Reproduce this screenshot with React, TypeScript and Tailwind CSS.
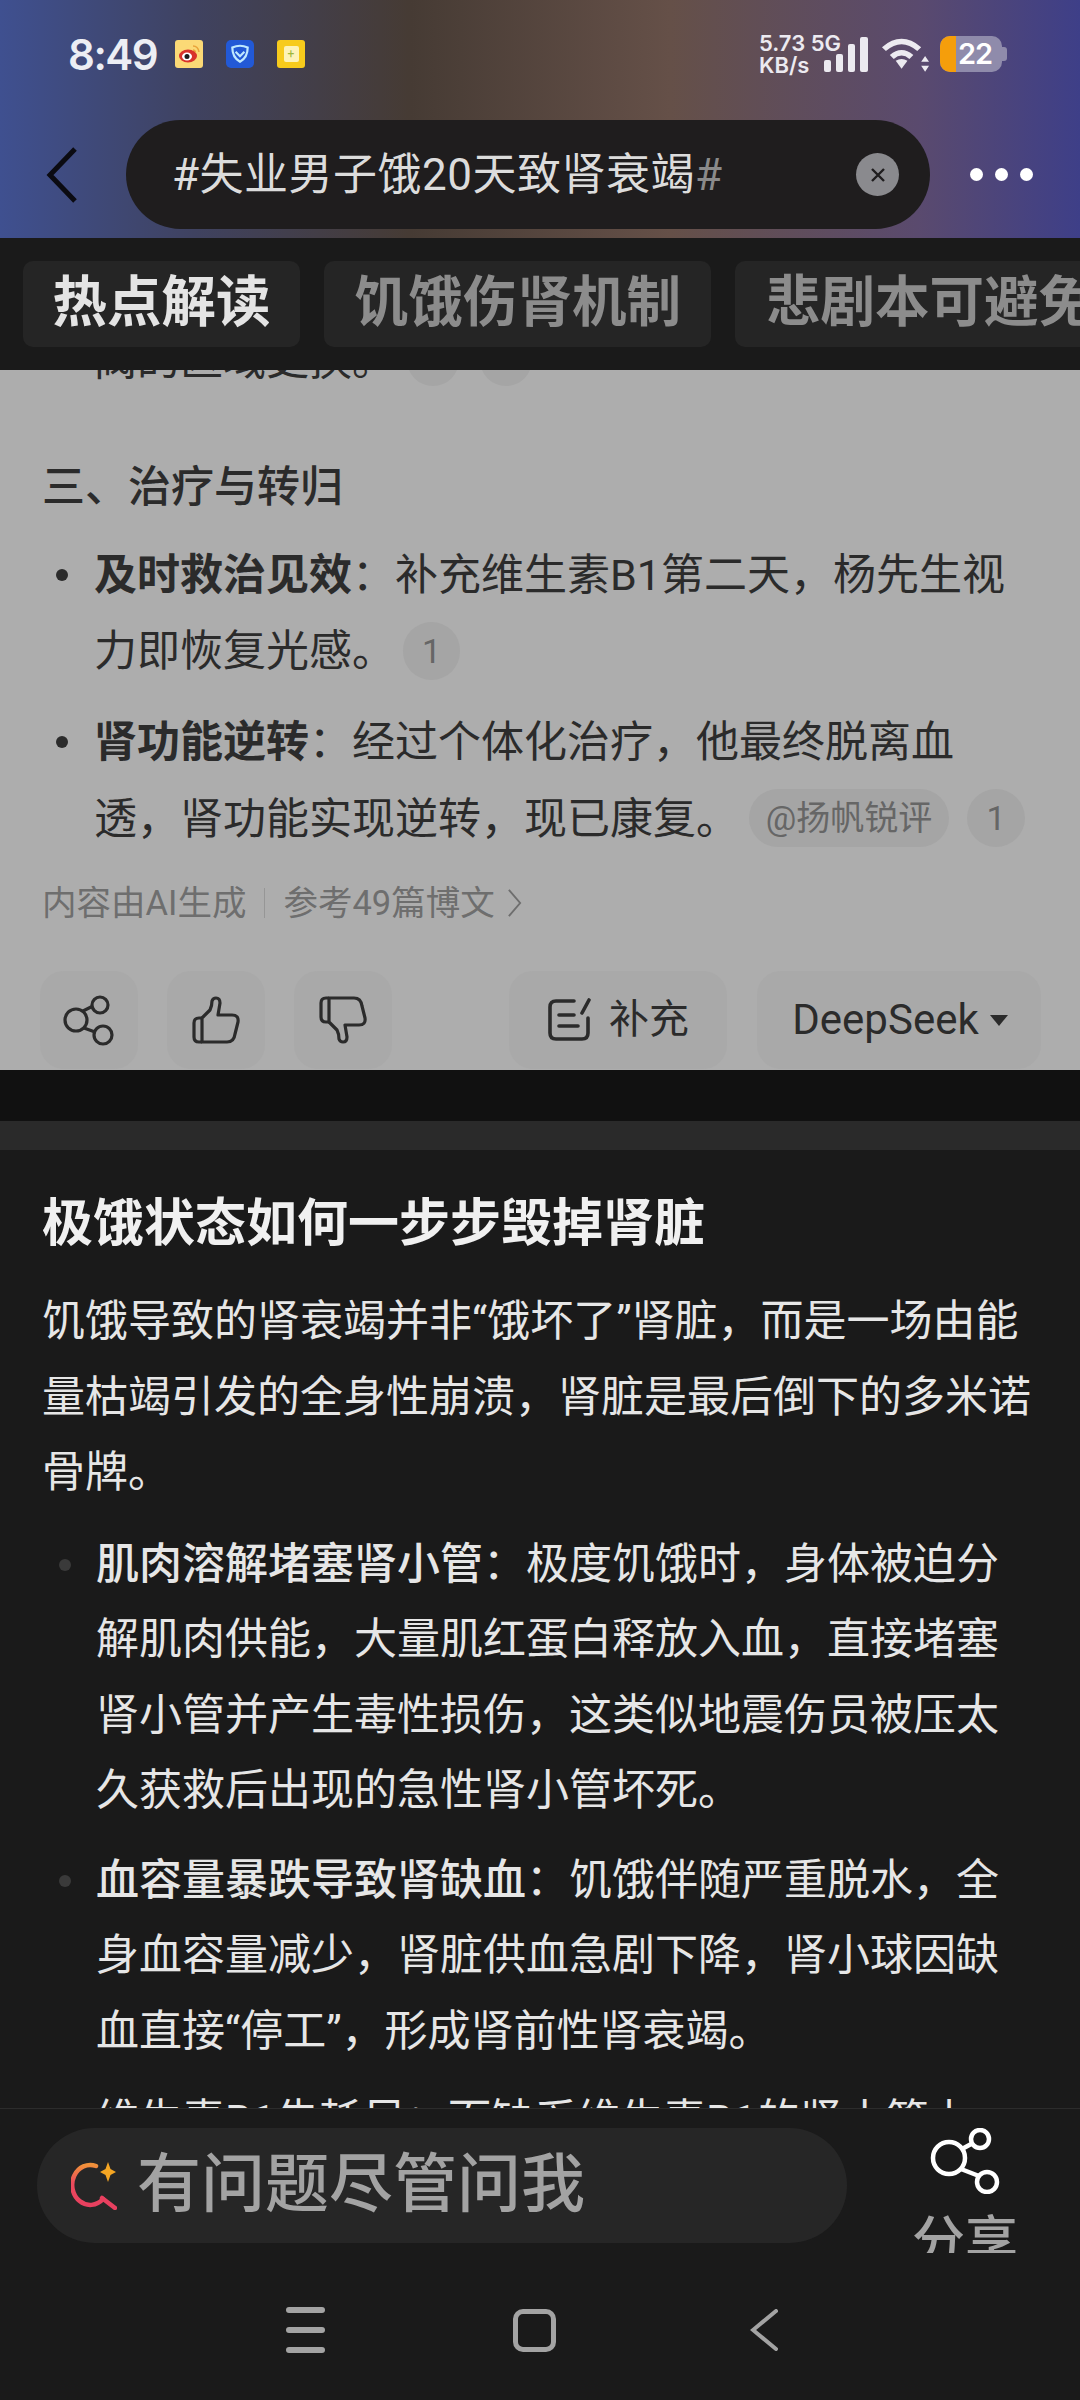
const SANS = "font-['Roboto','Noto_Sans_CJK_SC',sans-serif]";

const Chip = ({ children, className }: { children: React.ReactNode; className?: string }) => (
  <span className={`flex h-[58px] shrink-0 items-center justify-center rounded-full bg-[#a5a5a5] text-[34px] leading-none text-[#666666] ${className ?? ""}`}>
    {children}
  </span>
);

const ThumbIcon = ({ className }: { className?: string }) => (
  <svg viewBox="0 0 48 48" className={`h-[48px] w-[48px] ${className ?? ""}`} fill="none" stroke="currentColor" strokeWidth="3.2" strokeLinejoin="round">
    <path d="M10 22L18 14Q20 10 20 5Q21 2 24 2Q28 2 28 7L26 19H40Q47 19 46 26L43 38Q42 46 35 46H10Z" />
    <path d="M10 22H7Q2 22 2 27V41Q2 46 7 46H10" />
  </svg>
);

const SearchSpark = () => (
  <svg viewBox="0 0 46 48" className="h-[48px] w-[46px]" fill="none">
    <defs>
      <linearGradient id="spark" x1="0" y1="0" x2="0" y2="1">
        <stop offset="0" stopColor="#f0913a" />
        <stop offset="0.45" stopColor="#ec4a5c" />
        <stop offset="1" stopColor="#e8405f" />
      </linearGradient>
    </defs>
    <path d="M25 4A18 20 0 1 0 32 37" stroke="url(#spark)" strokeWidth="4.5" strokeLinecap="round" />
    <path d="M31 36L44 46" stroke="#e8405f" strokeWidth="4.5" strokeLinecap="round" />
    <path d="M37 0l2.500 7 5.500 3-5.500 3-2.500 7-2.500-7-5.500-3 5.500-3z" fill="#f5a623" />
  </svg>
);

export default function App() {
  return (
    <div className={`relative h-[2400px] w-[1080px] overflow-hidden bg-[#1a1a1a] ${SANS}`}>
      {/* Header */}
      <header className="h-[238px] bg-[linear-gradient(90deg,#3f5090_0%,#3f4260_18%,#463b34_38%,#655048_62%,#5a4a6e_85%,#3e3f88_100%)]">
        <div className="flex h-[108px] items-center justify-between pl-[68px] pr-[73px]">
          <div className="flex items-center">
            <span className="w-[107px] font-['Inter'] text-[42px] font-semibold tracking-[-1.5px] text-[#eceef4]">8:49</span>
            <div className="flex gap-[23px]">
              <span className="flex h-[28px] w-[28px] items-center justify-center rounded-[3px] bg-[#fbd976]">
                <svg viewBox="0 0 28 28" className="h-[28px] w-[28px]" fill="none">
                  <path d="M18 6q5 0 6 6M18 10q2 0 2.500 2.500" stroke="#e8a33a" strokeWidth="1.500" />
                  <ellipse cx="13" cy="16" rx="9" ry="6.500" fill="#d8322a" />
                  <ellipse cx="12" cy="16.500" rx="5" ry="4" fill="#ffffff" />
                  <circle cx="12" cy="16.500" r="2.500" fill="#1c1c1c" />
                </svg>
              </span>
              <span className="flex h-[28px] w-[28px] items-center justify-center rounded-[5px] bg-[#2259d6]">
                <svg viewBox="0 0 20 20" className="h-[22px] w-[22px]" fill="none" stroke="#bfe9ff" strokeWidth="2">
                  <path d="M3 4q7-3 14 0q0 9-7 13q-7-4-7-13zM6 8l4 4 4-4" />
                </svg>
              </span>
              <span className="flex h-[28px] w-[28px] items-center justify-center rounded-[3px] bg-[#f7cb1c]">
                <span className="flex h-[16px] w-[15px] items-center justify-center rounded-[2px] bg-[#fdf3b8] text-[12px] leading-none text-[#9db83a]">+</span>
              </span>
            </div>
          </div>
          <div className="flex items-center">
            <div className="w-[78px] font-['Inter'] text-[22px] font-semibold leading-[22px] whitespace-nowrap text-[#eceaf0]">
              <div>5.73 5G</div>
              <div>KB/s</div>
            </div>
            <div className="ml-[-13px] mt-[1px] flex items-end gap-[5px]">
              <span className="h-[12px] w-[7px] rounded-[2px] bg-[#eceaf0]" />
              <span className="h-[18px] w-[7px] rounded-[2px] bg-[#eceaf0]" />
              <span className="h-[28px] w-[7px] rounded-[2px] bg-[#eceaf0]" />
              <span className="h-[35px] w-[8px] rounded-[2px] bg-[#eceaf0]" />
            </div>
            <svg viewBox="0 0 50 36" className="ml-[13px] h-[36px] w-[49px]" fill="#eceaf0">
              <path d="M1 11Q21-6 41 11l-4 4Q21 1 5 15z" />
              <path d="M9 19q12-10 24 0l-4 4q-8-7-16 0z" />
              <path d="M15 25q6-4 12 0l-6 8z" />
              <path d="M45 20l4 6h-8zM45 36l-4-6h8z" />
            </svg>
            <div className="relative ml-[10px] h-[36px] w-[62px] overflow-hidden rounded-[10px] bg-[#8f8bab]">
              <span className="absolute inset-y-0 left-0 w-[16px] bg-[#f59e0b]" />
              <span className="absolute left-[18px] top-0 font-['Inter'] text-[29px] font-semibold tracking-[-1px] leading-[36px] text-white">22</span>
            </div>
            <span className="h-[14px] w-[5px] rounded-r-[3px] bg-[#8f8bab]" />
          </div>
        </div>
        <div className="mt-[12px] flex items-center">
          <svg viewBox="0 0 36 56" className="ml-[44px] h-[56px] w-[36px]" fill="none" stroke="#0b0b12" strokeWidth="5">
            <path d="M31 2L6 28l25 26" />
          </svg>
          <div className="ml-[46px] flex h-[109px] w-[804px] items-center rounded-full bg-[#1f1d1e] pl-[46px] pr-[31px]">
            <span className="text-[44px] leading-none tracking-[0.5px] text-[#dcdcdc]">
              #失业男子饿20天致肾衰竭<span className="text-[#8a8a8a]">#</span>
            </span>
            <span className="ml-auto flex h-[43px] w-[43px] items-center justify-center rounded-full bg-[#8a8a8e] text-[#1f1d1e]">
              <svg viewBox="0 0 20 20" className="h-[20px] w-[20px]" stroke="currentColor" strokeWidth="2.4">
                <path d="M4 4l12 12M16 4L4 16" />
              </svg>
            </span>
          </div>
          <div className="ml-[40px] flex gap-[12px]">
            <span className="h-[13px] w-[13px] rounded-full bg-white" />
            <span className="h-[13px] w-[13px] rounded-full bg-white" />
            <span className="h-[13px] w-[13px] rounded-full bg-white" />
          </div>
        </div>
      </header>

      {/* Tabs */}
      <nav className="relative z-10 flex h-[132px] items-center gap-[24px] overflow-hidden bg-[#1a1a1a] pl-[23px] text-[54.500px] leading-none">
        <div className="flex h-[86px] w-[277px] shrink-0 items-center justify-center rounded-[10px] bg-[#252525] pb-[4px] font-bold text-[#e4e4e4]">热点解读</div>
        <div className="flex h-[86px] w-[387px] shrink-0 items-center justify-center rounded-[10px] bg-[#252525] pb-[4px] font-semibold text-[#8c8c8c]">饥饿伤肾机制</div>
        <div className="flex h-[86px] w-[400px] shrink-0 items-center rounded-[10px] bg-[#252525] pb-[4px] pl-[31px] font-semibold whitespace-nowrap text-[#8c8c8c]">悲剧本可避免</div>
      </nav>

      {/* Light answer card, dimmed */}
      <section className="h-[700px] overflow-hidden bg-[#adadad] pl-[42px] text-[43px] text-[#2b2b2b]">
        <div className="-mt-[42px] flex h-[58px] items-center pl-[52px]">
          <span className="pt-[6px]">阀的区域更换。</span>
          <Chip className="ml-[12px] w-[52px]">{""}</Chip>
          <Chip className="ml-[21px] w-[52px]">{""}</Chip>
        </div>
        <h3 className="mt-[71px] text-[43px] font-medium leading-[60px]">三、治疗与转归</h3>
        <ul className="mt-[21px]">
          <li className="relative pl-[52px] leading-[75px]">
            <span className="absolute left-[14px] top-[31px] h-[12px] w-[12px] rounded-full bg-[#2b2b2b]" />
            <div>
              <b className="font-semibold">及时救治见效</b>：补充维生素B1第二天，杨先生视
            </div>
            <div className="flex h-[75px] items-center">
              <span className="pt-[2px]">力即恢复光感。</span>
              <Chip className="ml-[8px] w-[57px]">1</Chip>
            </div>
          </li>
          <li className="relative mt-[17px] pl-[52px] leading-[75px]">
            <span className="absolute left-[14px] top-[31px] h-[12px] w-[12px] rounded-full bg-[#2b2b2b]" />
            <div>
              <b className="font-semibold">肾功能逆转</b>：经过个体化治疗，他最终脱离血
            </div>
            <div className="flex h-[75px] items-center">
              <span className="pt-[3px]">透，肾功能实现逆转，现已康复。</span>
              <Chip className="ml-[10px] w-[200px]">@扬帆锐评</Chip>
              <Chip className="ml-[18px] w-[58px]">1</Chip>
            </div>
          </li>
        </ul>
        <div className="mt-[23px] flex items-center text-[34.500px] leading-[50px] text-[#6e6e6e]">
          <span>内容由AI生成</span>
          <span className="mx-[18px] h-[30px] w-[1px] bg-[#969696]" />
          <span>参考49篇博文</span>
          <svg viewBox="0 0 16 32" className="ml-[12px] h-[30px] w-[15px]" fill="none" stroke="currentColor" strokeWidth="2">
            <path d="M2 2l12 14L2 30" />
          </svg>
        </div>
        <div className="mt-[43px] flex h-[98px] items-center text-[#2b2b2b]">
          <div className="-ml-[2px] flex h-[98px] w-[98px] items-center justify-center rounded-[24px] bg-[#a9a9a9]">
            <svg viewBox="0 0 52 52" className="h-[52px] w-[52px]" fill="none" stroke="currentColor" strokeWidth="3.2">
              <circle cx="13" cy="26" r="11" />
              <circle cx="37" cy="11" r="8" />
              <circle cx="40" cy="41" r="9" />
              <path d="M20 17l10-5M21 34l11 4" />
            </svg>
          </div>
          <div className="ml-[29px] flex h-[98px] w-[98px] items-center justify-center rounded-[24px] bg-[#a9a9a9]">
            <ThumbIcon />
          </div>
          <div className="ml-[29px] flex h-[98px] w-[98px] items-center justify-center rounded-[24px] bg-[#a9a9a9]">
            <ThumbIcon className="-scale-y-100" />
          </div>
          <div className="ml-[117px] flex h-[98px] w-[218px] items-center justify-center gap-[18px] rounded-[24px] bg-[#a9a9a9] text-[40px]">
            <svg viewBox="0 0 44 44" className="h-[44px] w-[44px]" fill="none" stroke="currentColor" strokeWidth="3.6" strokeLinecap="round">
              <path d="M27 3H9Q3 3 3 9V35Q3 41 9 41H35Q41 41 41 35V20M42 2L35 15M12 17H27M12 28H31" />
            </svg>
            <span className="leading-none">补充</span>
          </div>
          <div className="ml-[30px] flex h-[98px] w-[284px] items-center justify-center gap-[11px] rounded-[24px] bg-[#a9a9a9] pl-[2px] text-[42px]">
            <span className="leading-none">DeepSeek</span>
            <span className="h-0 w-0 border-x-[9px] border-t-[11px] border-x-transparent border-t-[#2b2b2b]" />
          </div>
        </div>
      </section>

      {/* Gap and strip */}
      <div className="h-[51px] bg-[#111111]" />
      <div className="h-[29px] bg-[#2a2a2a]" />

      {/* Dark section */}
      <section className="px-[42px] pt-[43px] text-[43px] text-[#e6e6e6]">
        <h2 className="text-[51px] font-bold leading-[62px] text-[#f0f0f0]">极饿状态如何一步步毁掉肾脏</h2>
        <p className="mt-[29px] leading-[75.500px]">
          饥饿导致的肾衰竭并非“饿坏了”肾脏，而是一场由能
          <br />
          量枯竭引发的全身性崩溃，肾脏是最后倒下的多米诺
          <br />
          骨牌。
        </p>
        <ul className="mt-[16px] leading-[75.500px]">
          <li className="relative pl-[54px]">
            <span className="absolute left-[17px] top-[32px] h-[12px] w-[12px] rounded-full bg-[#3a3a3a]" />
            <b className="font-medium">肌肉溶解堵塞肾小管</b>：极度饥饿时，身体被迫分
            <br />
            解肌肉供能，大量肌红蛋白释放入血，直接堵塞
            <br />
            肾小管并产生毒性损伤，这类似地震伤员被压太
            <br />
            久获救后出现的急性肾小管坏死。
          </li>
          <li className="relative mt-[14px] pl-[54px]">
            <span className="absolute left-[17px] top-[32px] h-[12px] w-[12px] rounded-full bg-[#3a3a3a]" />
            <b className="font-medium">血容量暴跌导致肾缺血</b>：饥饿伴随严重脱水，全
            <br />
            身血容量减少，肾脏供血急剧下降，肾小球因缺
            <br />
            血直接“停工”，形成肾前性肾衰竭。
          </li>
          <li className="relative mt-[14px] pl-[54px]">维生素B1告耗尽：而缺乏维生素B1的肾小管上</li>
        </ul>
      </section>

      {/* Bottom bar lies over the scrolled text */}
      <div className="absolute inset-x-0 bottom-0 h-[292px] border-t border-[#2c2c2c] bg-[#1a1a1a]">
        <div className="flex h-[145px] pl-[37px] pt-[19px]">
          <div className="flex h-[115px] w-[810px] items-center rounded-full bg-[#262626] pl-[34px]">
            <SearchSpark />
            <span className="ml-[20px] pb-[2px] text-[64px] font-medium leading-none text-[#a3a3a3]">有问题尽管问我</span>
          </div>
          <div className="ml-[65px] flex h-[125px] w-[106px] flex-col items-center overflow-hidden">
            <svg viewBox="0 0 70 66" className="h-[66px] w-[70px] shrink-0" fill="none" stroke="#ffffff" strokeWidth="4.500">
              <circle cx="19" cy="30" r="16" />
              <circle cx="50" cy="11" r="9" />
              <circle cx="57" cy="54" r="10" />
              <path d="M32 21l11-6M31 41l18 7" />
            </svg>
            <span className="mt-[22px] text-[53px] font-medium leading-none whitespace-nowrap text-[#a3a3a3]">分享</span>
          </div>
        </div>
        <div className="mt-[53px] flex items-center pl-[286px]">
          <div className="flex w-[39px] flex-col gap-[14px]">
            <span className="h-[6px] rounded-full bg-[#a3a3a3]" />
            <span className="h-[6px] rounded-full bg-[#a3a3a3]" />
            <span className="h-[6px] rounded-full bg-[#a3a3a3]" />
          </div>
          <span className="ml-[188px] h-[43px] w-[43px] rounded-[10px] border-[5px] border-[#a3a3a3]" />
          <svg viewBox="0 0 28 42" className="ml-[194px] h-[42px] w-[28px]" fill="none" stroke="#a3a3a3" strokeWidth="4" strokeLinecap="round">
            <path d="M26 2L3 21l23 19" />
          </svg>
        </div>
      </div>
    </div>
  );
}
